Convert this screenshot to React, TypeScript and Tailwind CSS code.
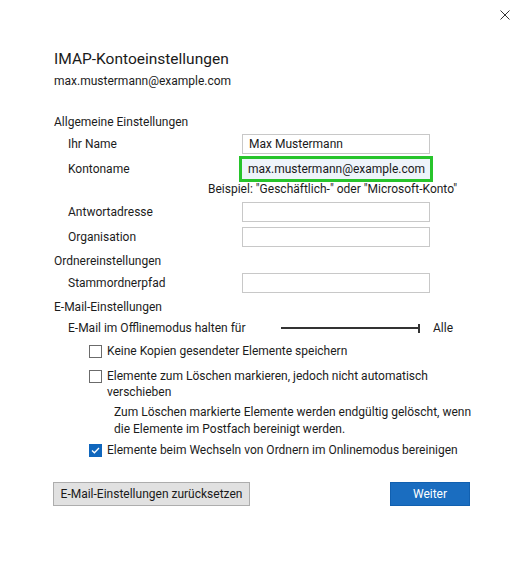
import React from "react";

const FONT = "font-['Roboto',_'Noto_Sans',_sans-serif]";

function Field({ label, value }: { label: string; value?: string }) {
  return (
    <div className="mt-[5px] flex h-[20px] items-center">
      <span className="w-[188px] pl-[14px] text-[12px] leading-[16px] text-[#1c1c1c]">
        {label}
      </span>
      <div className="flex h-[20px] w-[188px] items-center border border-[#c8c8c8] bg-white px-[6px] text-[12px] text-[#1a1a1a]">
        {value}
      </div>
    </div>
  );
}

function Check({
  checked,
  children,
}: {
  checked?: boolean;
  children: React.ReactNode;
}) {
  return (
    <div className="flex items-start pl-[35px]">
      <span
        className={
          checked
            ? "mt-[2px] flex h-[13px] w-[13px] shrink-0 items-center justify-center bg-[#0f66bd]"
            : "mt-[2px] h-[13px] w-[13px] shrink-0 border border-[#6b6b6b] bg-white"
        }
      >
        {checked ? (
          <svg width="9" height="7" viewBox="0 0 9 7" fill="none">
            <path d="M1 3.5 L3.4 5.8 L8 1" stroke="white" strokeWidth="1.3" />
          </svg>
        ) : null}
      </span>
      <span className="ml-[5px] text-[12px] leading-[16px] text-[#1c1c1c]">
        {children}
      </span>
    </div>
  );
}

export default function App() {
  return (
    <div className={`relative h-[561px] w-[528px] bg-white ${FONT}`}>
      {/* close button */}
      <svg
        className="absolute left-[500px] top-[10px]"
        width="10"
        height="10"
        viewBox="0 0 10 10"
      >
        <path d="M0.5 0.5 L9.5 9.5 M9.5 0.5 L0.5 9.5" stroke="#333" strokeWidth="1" />
      </svg>

      <div className="flex flex-col pl-[54px] pt-[47px]">
        <h1 className="text-[15.5px] leading-[24px] text-[#1a1a1a]">
          IMAP-Kontoeinstellungen
        </h1>
        <p className="mt-[2px] text-[12px] leading-[16px] text-[#1c1c1c]">
          max.mustermann@example.com
        </p>

        <p className="mt-[25px] text-[12px] leading-[16px] text-[#1c1c1c]">
          Allgemeine Einstellungen
        </p>
        <div className="mt-[4px] flex h-[20px] items-center">
          <span className="w-[188px] pl-[14px] text-[12px] leading-[16px] text-[#1c1c1c]">
            Ihr Name
          </span>
          <div className="flex h-[20px] w-[188px] items-center border border-[#c8c8c8] bg-white px-[6px] text-[12px] text-[#1a1a1a]">
            Max Mustermann
          </div>
        </div>
        <div className="mt-[5px] flex h-[20px] items-center">
          <span className="w-[188px] pl-[14px] text-[12px] leading-[16px] text-[#1c1c1c]">
            Kontoname
          </span>
          <div className="flex h-[20px] w-[188px] items-center bg-[#eef4fa] px-[6px] text-[12px] text-[#1a1a1a] outline-[3px] outline-[#27c42b] outline-solid">
            max.mustermann@example.com
          </div>
        </div>
        <p className="mt-[2px] pl-[154px] text-[12px] leading-[16px] text-[#1c1c1c]">
          Beispiel: "Geschäftlich-" oder "Microsoft-Konto"
        </p>
        <Field label="Antwortadresse" />
        <Field label="Organisation" />

        <p className="mt-[6px] text-[12px] leading-[16px] text-[#1c1c1c]">
          Ordnereinstellungen
        </p>
        <div className="mt-[-1px]">
          <Field label="Stammordnerpfad" />
        </div>

        <p className="mt-[6px] text-[12px] leading-[16px] text-[#1c1c1c]">
          E-Mail-Einstellungen
        </p>
        <div className="mt-[5px] flex h-[16px] items-center pl-[14px]">
          <span className="w-[213px] text-[12px] leading-[16px] text-[#1c1c1c]">
            E-Mail im Offlinemodus halten für
          </span>
          <div className="flex w-[139px] items-center">
            <div className="h-[2px] flex-1 bg-[#333]" />
            <div className="h-[9px] w-[2px] bg-[#333]" />
          </div>
          <span className="ml-[13px] text-[12px] leading-[16px] text-[#1c1c1c]">
            Alle
          </span>
        </div>

        <div className="mt-[7px]">
          <Check>Keine Kopien gesendeter Elemente speichern</Check>
        </div>
        <div className="mt-[9px]">
          <Check>
            Elemente zum Löschen markieren, jedoch nicht automatisch
            <br />
            verschieben
          </Check>
        </div>
        <p className="mt-[4px] pl-[60px] text-[12px] leading-[17px] text-[#1c1c1c]">
          Zum Löschen markierte Elemente werden endgültig gelöscht, wenn
          <br />
          die Elemente im Postfach bereinigt werden.
        </p>
        <div className="mt-[4px]">
          <Check checked>
            Elemente beim Wechseln von Ordnern im Onlinemodus bereinigen
          </Check>
        </div>

        <div className="mt-[24px] flex w-[416px] items-center justify-between">
          <button className="-ml-[1px] h-[24px] w-[197px] border border-[#adadad] bg-[#e1e1e1] text-[12px] text-[#1a1a1a]">
            E-Mail-Einstellungen zurücksetzen
          </button>
          <button className="h-[24px] w-[80px] border border-[#1160b0] bg-[#1a6dc0] text-[12px] text-white">
            Weiter
          </button>
        </div>
      </div>
    </div>
  );
}
